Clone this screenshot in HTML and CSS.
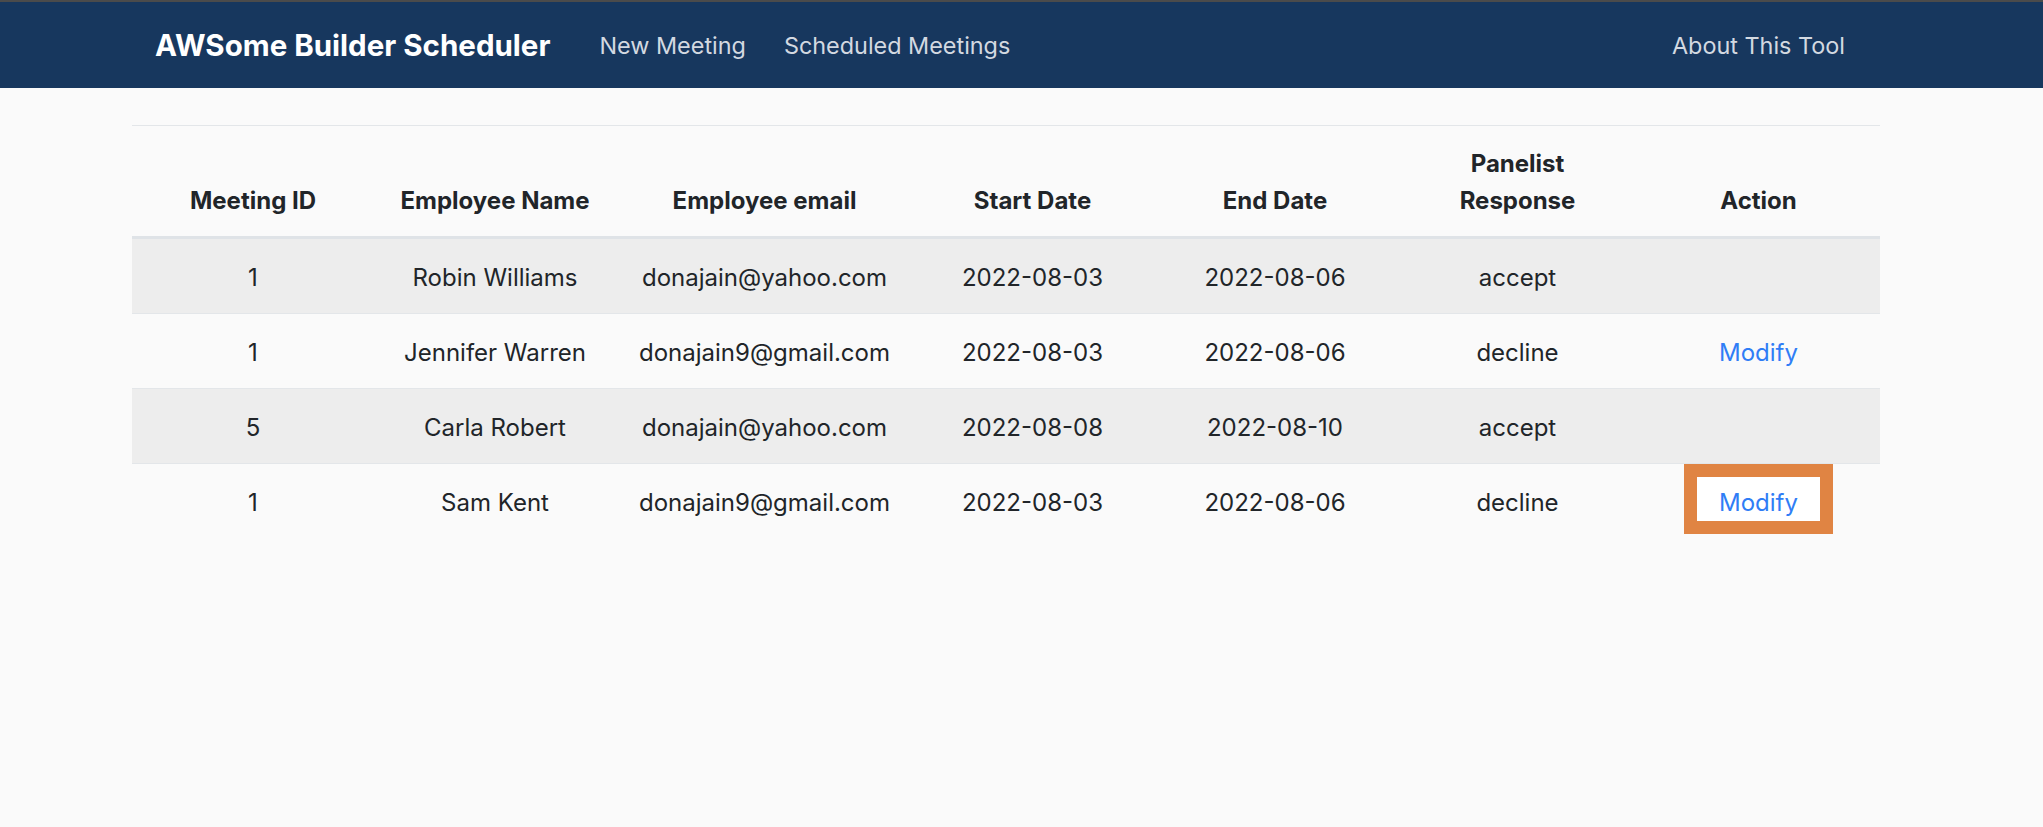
FILE: index.html
```html
<!DOCTYPE html>
<html lang="en">
<head>
<meta charset="utf-8">
<title>AWSome Builder Scheduler</title>
<link rel="stylesheet" href="styles.css">
</head>
<body>
<div class="chrome-strip"></div>
<nav class="navbar">
  <div class="nav-inner">
    <a class="brand" href="#">AWSome Builder Scheduler</a>
    <a class="nav-link" href="#">New Meeting</a>
    <a class="nav-link" href="#">Scheduled Meetings</a>
    <a class="nav-link nav-right" href="#">About This Tool</a>
  </div>
</nav>
<main class="container">
  <table class="meetings">
    <colgroup>
      <col class="c1"><col class="c2"><col class="c3"><col class="c4"><col class="c5"><col class="c6"><col class="c7">
    </colgroup>
    <thead>
      <tr>
        <th>Meeting ID</th>
        <th>Employee Name</th>
        <th>Employee email</th>
        <th>Start Date</th>
        <th>End Date</th>
        <th>Panelist<br>Response</th>
        <th>Action</th>
      </tr>
    </thead>
    <tbody>
      <tr class="odd">
        <td>1</td><td>Robin Williams</td><td>donajain@yahoo.com</td><td>2022-08-03</td><td>2022-08-06</td><td>accept</td><td></td>
      </tr>
      <tr>
        <td>1</td><td>Jennifer Warren</td><td>donajain9@gmail.com</td><td>2022-08-03</td><td>2022-08-06</td><td>decline</td><td><a class="action-link" href="#">Modify</a></td>
      </tr>
      <tr class="odd">
        <td>5</td><td>Carla Robert</td><td>donajain@yahoo.com</td><td>2022-08-08</td><td>2022-08-10</td><td>accept</td><td></td>
      </tr>
      <tr>
        <td>1</td><td>Sam Kent</td><td>donajain9@gmail.com</td><td>2022-08-03</td><td>2022-08-06</td><td>decline</td><td><span class="highlight"><a class="action-link" href="#">Modify</a></span></td>
      </tr>
    </tbody>
  </table>
</main>
</body>
</html>
```
FILE: styles.css
```css
* { box-sizing: border-box; }

html, body {
  margin: 0;
  padding: 0;
}

body {
  background: #fafafa;
  color: #212529;
  font-family: Inter, "Noto Sans", "Liberation Sans", sans-serif;
  font-size: 24px;
  line-height: 37px;
}

.chrome-strip {
  height: 2px;
  background: #4b4b4b;
}

.navbar {
  background: #17375e;
  height: 86px;
  display: flex;
  align-items: center;
}

.nav-inner {
  flex: 1;
  display: flex;
  align-items: center;
  padding: 0 198px 0 155px;
}

.brand {
  color: #ffffff;
  font-weight: 700;
  font-size: 29.5px;
  text-decoration: none;
  margin-right: 49px;
}

.nav-link {
  color: #d3d9e1;
  font-size: 23.4px;
  text-decoration: none;
  margin-right: 38px;
}

.nav-right {
  margin-left: auto;
  margin-right: 0;
}

.container {
  margin: 37px 0 0 132px;
  width: 1748px;
}

.meetings {
  width: 1748px;
  table-layout: fixed;
  border-collapse: collapse;
  border-top: 1px solid #e3e6e9;
}

.c1 { width: 242px; }
.c2 { width: 242px; }
.c3 { width: 297px; }
.c4 { width: 239px; }
.c5 { width: 246px; }
.c6 { width: 239px; }
.c7 { width: 243px; }

.meetings th {
  font-weight: 700;
  text-align: center;
  vertical-align: bottom;
  padding: 19px 8px 17px;
  border-bottom: 3px solid #dfe3e7;
}

.meetings td {
  text-align: center;
  vertical-align: middle;
  padding: 20px 8px 17px;
  border-bottom: 1px solid #e3e6e9;
}

.meetings tbody tr:last-child td {
  border-bottom: none;
}

.meetings tr.odd td {
  background: #ededed;
}

.action-link {
  color: #2f7df6;
  text-decoration: none;
}

.highlight {
  position: relative;
  display: inline-block;
  z-index: 0;
}

.highlight::before {
  content: "";
  position: absolute;
  top: -20px;
  bottom: -13px;
  left: -35px;
  right: -35px;
  background: #ffffff;
  border: 13px solid #e08443;
  z-index: -1;
}
```
